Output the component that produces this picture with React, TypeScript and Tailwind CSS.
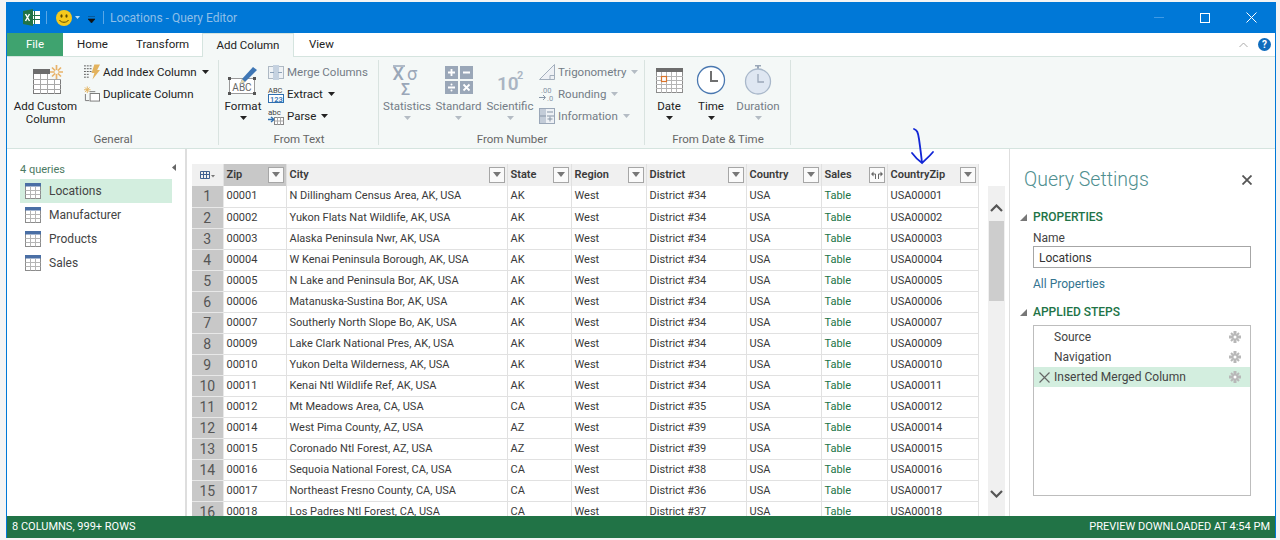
const FONT = { fontFamily: 'Roboto, "Noto Sans", sans-serif' };

const rows: [string, string, string, string][] = [
  ['00001', 'N Dillingham Census Area, AK, USA', 'AK', '34'],
  ['00002', 'Yukon Flats Nat Wildlife, AK, USA', 'AK', '34'],
  ['00003', 'Alaska Peninsula Nwr, AK, USA', 'AK', '34'],
  ['00004', 'W Kenai Peninsula Borough, AK, USA', 'AK', '34'],
  ['00005', 'N Lake and Peninsula Bor, AK, USA', 'AK', '34'],
  ['00006', 'Matanuska-Sustina Bor, AK, USA', 'AK', '34'],
  ['00007', 'Southerly North Slope Bo, AK, USA', 'AK', '34'],
  ['00009', 'Lake Clark National Pres, AK, USA', 'AK', '34'],
  ['00010', 'Yukon Delta Wilderness, AK, USA', 'AK', '34'],
  ['00011', 'Kenai Ntl Wildlife Ref, AK, USA', 'AK', '34'],
  ['00012', 'Mt Meadows Area, CA, USA', 'CA', '35'],
  ['00014', 'West Pima County, AZ, USA', 'AZ', '39'],
  ['00015', 'Coronado Ntl Forest, AZ, USA', 'AZ', '39'],
  ['00016', 'Sequoia National Forest, CA, USA', 'CA', '38'],
  ['00017', 'Northeast Fresno County, CA, USA', 'CA', '36'],
  ['00018', 'Los Padres Ntl Forest, CA, USA', 'CA', '37'],
];

function Caret({ dim }: { dim?: boolean }) {
  return (
    <svg width="7" height="4" viewBox="0 0 7 4" className="shrink-0">
      <path d="M0 0h7L3.500 4z" fill={dim ? '#b4bcc4' : '#222'} />
    </svg>
  );
}

function TableIcon() {
  return (
    <svg width="16" height="16" viewBox="0 0 16 16" className="shrink-0">
      <rect x="0.500" y="0.500" width="15" height="15" fill="#fff" stroke="#8c8c8c" />
      <rect x="0" y="0" width="16" height="3.500" fill="#4a6fa5" />
      <path d="M5.500 3.500v12M10.500 3.500v12M0.500 7.500h15M0.500 11.500h15" stroke="#b5b5b5" />
    </svg>
  );
}

function AddCustomIcon() {
  return (
    <svg width="36" height="30" viewBox="0 0 36 30">
      <rect x="5.500" y="4.500" width="27" height="24" fill="#fff" stroke="#7a7a7a" />
      <rect x="5" y="4" width="20" height="5" fill="#6d6d6d" />
      <path d="M5 14.500h28M5 19.500h28M5 24.500h28M12.500 9v20M19.500 9v20M26.500 9v20" stroke="#a8a8a8" />
      <rect x="22" y="1" width="13" height="13" fill="#f4f8f7" />
      <path d="M28.500 0v14M22 7h13M24 2.500l9 9M33 2.500l-9 9" stroke="#e8b36a" strokeWidth="1.700" />
      <circle cx="28.500" cy="7" r="2" fill="#f4f8f7" />
    </svg>
  );
}

function IndexIcon() {
  return (
    <svg width="17" height="16" viewBox="0 0 17 16">
      <path d="M0 1.500h9M0 4.500h8M0 7.500h8M0 10.500h6M0 13.500h5" stroke="#555" strokeDasharray="2 1" />
      <path d="M11 0h6l-3 6h3L9 16l2-7H8z" fill="#e3b35e" />
    </svg>
  );
}

function DuplicateIcon() {
  return (
    <svg width="17" height="16" viewBox="0 0 17 16">
      <path d="M3.500 0v7M0 3.500h7M1 1l5 5M6 1L1 6" stroke="#e3b35e" />
      <path d="M1.500 8v7h4" fill="none" stroke="#777" />
      <rect x="6.500" y="7.500" width="10" height="8" fill="#fff" stroke="#777" />
      <path d="M6 5.500h6" stroke="#777" />
    </svg>
  );
}

function FormatIcon() {
  return (
    <svg width="30" height="30" viewBox="0 0 30 30" className="overflow-visible">
      <rect x="1.500" y="13.500" width="25" height="15" fill="#fff" stroke="#9a9a9a" />
      <rect x="0" y="12" width="3" height="3" fill="#555" />
      <rect x="25" y="12" width="3" height="3" fill="#555" />
      <rect x="0" y="27" width="3" height="3" fill="#555" />
      <rect x="25" y="27" width="3" height="3" fill="#555" />
      <text x="14" y="26" textAnchor="middle" fontSize="10" fill="#666" style={FONT}>ABC</text>
      <path d="M12 19l2-5L25 2l4 3-12 12z" fill="#3f77b5" />
      <path d="M12 19l2-5 3 3z" fill="#e9d5a8" />
    </svg>
  );
}

function MergeIcon() {
  return (
    <svg width="16" height="16" viewBox="0 0 16 16">
      <rect x="0.500" y="2.500" width="15" height="12" fill="#eef2f5" stroke="#aeb9c4" />
      <rect x="5" y="1" width="6" height="15" fill="#c5d2e0" />
      <path d="M2 8.500h4M14 8.500h-4" stroke="#8fa3b8" />
    </svg>
  );
}

function ExtractIcon() {
  return (
    <svg width="16" height="17" viewBox="0 0 16 17" className="overflow-visible">
      <text x="0" y="7" fontSize="7.500" fill="#444" style={FONT}>ABC</text>
      <rect x="0.500" y="8.500" width="15" height="8" fill="#fff" stroke="#2f6fb0" />
      <text x="2" y="15.500" fontSize="7.500" fontWeight="600" fill="#2f6fb0" style={FONT}>123</text>
    </svg>
  );
}

function ParseIcon() {
  return (
    <svg width="16" height="17" viewBox="0 0 16 17" className="overflow-visible">
      <text x="0" y="7" fontSize="8" fill="#444" style={FONT}>abc</text>
      <path d="M0 11.500h5M3 9l3 2.500L3 14" fill="none" stroke="#2f6fb0" strokeWidth="1.400" />
      <rect x="6.500" y="9.500" width="9" height="7" fill="#fff" stroke="#888" />
      <path d="M9.500 9.500v7M12.500 9.500v7M6.500 13h9" stroke="#aaa" />
    </svg>
  );
}

function StatisticsIcon() {
  return (
    <svg width="30" height="30" viewBox="0 0 30 30" className="overflow-visible">
      <path d="M1 1h12" stroke="#9aa7b8" strokeWidth="1.500" />
      <text x="0.500" y="15" fontSize="18" fontWeight="500" fill="#9aa7b8" style={FONT}>X</text>
      <text x="15" y="15" fontSize="18" fill="#9aa7b8" style={FONT}>σ</text>
      <text x="9" y="30" fontSize="16" fontWeight="500" fill="#9aa7b8" style={FONT}>Σ</text>
    </svg>
  );
}

function StandardIcon() {
  return (
    <svg width="30" height="30" viewBox="0 0 30 30">
      <rect x="1" y="1" width="13" height="13" fill="#9aa7b8" />
      <rect x="16" y="1" width="13" height="13" fill="#9aa7b8" />
      <rect x="1" y="16" width="13" height="13" fill="#9aa7b8" />
      <rect x="16" y="16" width="13" height="13" fill="#9aa7b8" />
      <path d="M4 7.500h7M7.500 4v7M19 7.500h7M4 22.500h7M19.500 19.500l6 6M25.500 19.500l-6 6" stroke="#fff" strokeWidth="1.800" />
      <circle cx="7.500" cy="19.500" r="1" fill="#fff" />
      <circle cx="7.500" cy="25.500" r="1" fill="#fff" />
    </svg>
  );
}

function ScientificIcon() {
  return (
    <svg width="30" height="30" viewBox="0 0 30 30" className="overflow-visible">
      <text x="2" y="25" fontSize="19" fontWeight="600" fill="#aab5c3" style={FONT}>10</text>
      <text x="22" y="14" fontSize="11" fontWeight="600" fill="#aab5c3" style={FONT}>2</text>
    </svg>
  );
}

function TrigIcon() {
  return (
    <svg width="16" height="16" viewBox="0 0 16 16">
      <path d="M15.500 0.500v15H0.500z" fill="#eef1f5" stroke="#a3afbd" />
      <path d="M11 15.500v-4h4.500" fill="none" stroke="#a3afbd" />
    </svg>
  );
}

function RoundingIcon() {
  return (
    <svg width="16" height="16" viewBox="0 0 16 16" className="overflow-visible">
      <text x="2" y="7" fontSize="7.500" fill="#8795a6" style={FONT}>.00</text>
      <path d="M0 11.500h6M4 9l2.500 2.500L4 14" fill="none" stroke="#8795a6" />
      <text x="8" y="15" fontSize="7.500" fill="#8795a6" style={FONT}>.0</text>
    </svg>
  );
}

function InfoIcon() {
  return (
    <svg width="16" height="16" viewBox="0 0 16 16">
      <rect x="0.500" y="0.500" width="15" height="15" fill="#eef1f5" stroke="#9aa7b8" />
      <rect x="1" y="1" width="6" height="14" fill="#c3ccd8" />
      <path d="M8 4h6M8.500 11h5M11 8.500v5M1 8h6M8 8h7" stroke="#8795a6" />
    </svg>
  );
}

function DateIcon() {
  return (
    <svg width="27" height="25" viewBox="0 0 27 25" className="mb-[2px]">
      <rect x="0.500" y="0.500" width="26" height="24" fill="#fff" stroke="#8c8c8c" />
      <rect x="0" y="0" width="27" height="4" fill="#6d6d6d" />
      <path d="M0 8.500h27M0 12.500h27M0 16.500h27M0 20.500h27M5.500 4v21M10.500 4v21M15.500 4v21M20.500 4v21" stroke="#b5b5b5" />
      <rect x="5.500" y="8.500" width="5" height="5" fill="#fff" stroke="#d9742b" strokeWidth="1.200" />
    </svg>
  );
}

function TimeIcon() {
  return (
    <svg width="30" height="30" viewBox="0 0 30 30">
      <circle cx="15" cy="15" r="13.500" fill="#fff" stroke="#4a78b0" strokeWidth="1.300" />
      <path d="M15 6v10h7" fill="none" stroke="#707070" strokeWidth="2" />
    </svg>
  );
}

function DurationIcon() {
  return (
    <svg width="28" height="30" viewBox="0 0 28 30">
      <path d="M11 0.500h6M14 1v3" stroke="#9aa7b8" strokeWidth="2" />
      <circle cx="14" cy="16.500" r="12.500" fill="#dfe7f2" stroke="#a9b8ca" strokeWidth="1.300" />
      <path d="M14 9v8h6" fill="none" stroke="#9aa7b8" strokeWidth="1.300" />
    </svg>
  );
}

function LargeButton({ width, icon, lines, dim, caret }: { width: string; icon: React.ReactNode; lines: string[]; dim?: boolean; caret?: boolean }) {
  return (
    <div className={`${width} flex flex-col items-center pt-[8px] shrink-0`}>
      <div className="h-[30px] flex items-end justify-center">{icon}</div>
      <div className={`mt-[5px] text-center text-[11.5px] leading-[13px] whitespace-nowrap ${dim ? 'text-[#737c86]' : 'text-[#222]'}`}>
        {lines.map((l) => (
          <div key={l}>{l}</div>
        ))}
      </div>
      {caret && (
        <div className="mt-[3px]">
          <Caret dim={dim} />
        </div>
      )}
    </div>
  );
}

function SmallButton({ icon, label, dim, caret }: { icon: React.ReactNode; label: string; dim?: boolean; caret?: boolean }) {
  return (
    <div className={`h-[22px] flex items-center text-[11.5px] whitespace-nowrap ${dim ? 'text-[#737c86]' : 'text-[#222]'}`}>
      <span className="w-[16px] h-[17px] mr-[3px] flex items-center shrink-0">{icon}</span>
      <span className="pt-px">{label}</span>
      {caret && (
        <span className="ml-[5px]">
          <Caret dim={dim} />
        </span>
      )}
    </div>
  );
}

function Group({ width, label, children }: { width: string; label: string; children: React.ReactNode }) {
  return (
    <div className={`${width} shrink-0 relative flex flex-col h-full`}>
      <div className="flex flex-1 min-h-0">{children}</div>
      <div className="h-[18px] text-center text-[11.5px] leading-[18px] text-[#666]">{label}</div>
      <div className="absolute right-0 top-[3px] bottom-[3px] w-px bg-[#d9e3e0]" />
    </div>
  );
}

function FilterButton({ expand }: { expand?: boolean }) {
  return (
    <span className="ml-auto mr-[2px] w-[16px] h-[16px] border border-[#a6a6a6] bg-[#fafafa] flex items-center justify-center shrink-0">
      {expand ? (
        <svg width="12" height="8" viewBox="0 0 12 8">
          <path d="M0 3l2.500-2.500V5.500zM12 3L9.500 0.500V5.500z" fill="#666" />
          <path d="M2 3h2.500v5M10 3H7.500v5" fill="none" stroke="#666" />
        </svg>
      ) : (
        <svg width="8" height="5" viewBox="0 0 8 5">
          <path d="M0 0h8L4 5z" fill="#777" />
        </svg>
      )}
    </span>
  );
}

function Head({ label, active, expand }: { label: string; active?: boolean; expand?: boolean }) {
  return (
    <th className={`p-0 h-[22px] border-r border-[#e1e1e1] ${active ? 'bg-[#c8c8c8]' : 'bg-[#f0f0f0]'}`}>
      <div className="flex items-center pl-[3px] pb-px text-[11px] leading-[16px] font-semibold text-[#3a3a3a]">
        {label}
        <FilterButton expand={expand} />
      </div>
    </th>
  );
}

function Cell({ children, green }: { children: React.ReactNode; green?: boolean }) {
  return (
    <td className={`p-0 pl-[3px] h-[21px] border-r border-b border-[#e1e1e1] text-[11px] leading-[16px] whitespace-nowrap overflow-hidden ${green ? 'text-[#217346]' : 'text-[#3a3a3a]'}`}>
      {children}
    </td>
  );
}

function Gear() {
  return (
    <svg width="12" height="12" viewBox="0 0 12 12" className="ml-auto mr-[9px] shrink-0">
      <path d="M6 0v12M0 6h12" stroke="#b8b8b8" strokeWidth="3" />
      <path d="M2 2l8 8M10 2l-8 8" stroke="#b8b8b8" strokeWidth="2" />
      <circle cx="6" cy="6" r="1.500" fill="#fff" />
    </svg>
  );
}

function Step({ label, active }: { label: string; active?: boolean }) {
  return (
    <div className={`h-[20px] flex items-center text-[12px] text-[#444] ${active ? 'bg-[#d3eedf]' : ''}`}>
      <span className="w-[20px] flex justify-center shrink-0">
        {active && (
          <svg width="11" height="11" viewBox="0 0 11 11">
            <path d="M0.500 0.500l10 10M10.500 0.500l-10 10" stroke="#666" strokeWidth="1.200" />
          </svg>
        )}
      </span>
      {label}
      <Gear />
    </div>
  );
}

function Triangle() {
  return (
    <svg width="7" height="7" viewBox="0 0 7 7" className="shrink-0">
      <path d="M7 0v7H0z" fill="#777" />
    </svg>
  );
}

export default function App() {
  return (
    <div className="w-[1280px] h-[540px] overflow-hidden bg-[#f4f4f4] pt-[2px] pl-[6px] pr-[4px]" style={FONT}>
      <div className="relative h-[536px] flex flex-col border-x border-[#0078d7] bg-white">
        {/* Title bar */}
        <div className="h-[31px] shrink-0 bg-[#0078d7] flex items-center pl-[16px]">
          <svg width="17" height="17" viewBox="0 0 17 17" className="shrink-0">
            <rect x="6" y="2" width="11" height="13" fill="#fff" />
            <path d="M11.500 2v13M6 6.500h11M6 10.500h11" stroke="#217346" />
            <path d="M0 2l10-2v17L0 15z" fill="#217346" />
            <path d="M2.500 5l4 7M6.500 5l-4 7" stroke="#fff" strokeWidth="1.500" />
          </svg>
          <span className="ml-[6px] w-px h-[13px] bg-[#5aa7e6]" />
          <svg width="16" height="16" viewBox="0 0 16 16" className="ml-[9px] shrink-0">
            <circle cx="8" cy="8" r="8" fill="#f5c91c" />
            <ellipse cx="5.500" cy="6" rx="1.100" ry="1.700" fill="#5d4a00" />
            <ellipse cx="10.500" cy="6" rx="1.100" ry="1.700" fill="#5d4a00" />
            <path d="M3.500 10c1.500 3 7.500 3 9 0" fill="none" stroke="#5d4a00" />
          </svg>
          <svg width="5" height="3" viewBox="0 0 5 3" className="ml-[3px] shrink-0">
            <path d="M0 0h5L2.500 3z" fill="#b9dcf5" />
          </svg>
          <svg width="7" height="7" viewBox="0 0 7 7" className="ml-[8px] mt-[3px] shrink-0">
            <path d="M0 0h7M0 3h7L3.500 7z" fill="#111" stroke="#111" strokeWidth="0.600" />
          </svg>
          <span className="ml-[8px] w-px h-[13px] bg-[#5aa7e6]" />
          <span className="ml-[6px] text-[12px] text-[#8fbfe8]">Locations - Query Editor</span>
          <span className="ml-auto w-[10px] h-px bg-[#3f9ae6]" />
          <span className="ml-[36px] w-[10px] h-[10px] border border-white" />
          <svg width="11" height="11" viewBox="0 0 11 11" className="ml-[36px] mr-[18px] shrink-0">
            <path d="M0.500 0.500l10 10M10.500 0.500l-10 10" stroke="#fff" />
          </svg>
        </div>

        {/* Tabs */}
        <div className="h-[23px] shrink-0 flex items-center text-[11.5px] text-[#222] relative">
          <div className="w-[56px] h-full bg-[#3fa36f] text-white flex items-center justify-center pt-px">File</div>
          <div className="w-[73px] pl-[14px] pt-px">Home</div>
          <div className="w-[66px] pt-px">Transform</div>
          <div className="w-[92px] h-[24px] mt-px z-10 bg-[#f4f8f7] border-x border-t border-[#d5e4df] flex items-center justify-center">Add Column</div>
          <div className="ml-[15px] pt-px">View</div>
          <svg width="9" height="6" viewBox="0 0 9 6" className="ml-auto shrink-0">
            <path d="M0.500 5L4.500 1l4 4" fill="none" stroke="#aaa" />
          </svg>
          <span className="ml-[10px] mr-[4px] w-[13px] h-[13px] rounded-full bg-[#0f6cbd] text-white text-[10px] font-bold flex items-center justify-center">?</span>
        </div>

        {/* Ribbon */}
        <div className="h-[93px] shrink-0 flex bg-[#f4f8f7] border-y border-[#d5e4df]">
          <Group width="w-[212px]" label="General">
            <LargeButton width="w-[77px]" icon={<AddCustomIcon />} lines={['Add Custom', 'Column']} />
            <div className="pt-[4px]">
              <SmallButton icon={<IndexIcon />} label="Add Index Column" caret />
              <SmallButton icon={<DuplicateIcon />} label="Duplicate Column" />
            </div>
          </Group>
          <Group width="w-[160px]" label="From Text">
            <LargeButton width="w-[48px]" icon={<FormatIcon />} lines={['Format']} caret />
            <div className="pt-[4px] ml-px">
              <SmallButton icon={<MergeIcon />} label="Merge Columns" dim />
              <SmallButton icon={<ExtractIcon />} label="Extract" caret />
              <SmallButton icon={<ParseIcon />} label="Parse" caret />
            </div>
          </Group>
          <Group width="w-[266px]" label="From Number">
            <LargeButton width="w-[56px]" icon={<StatisticsIcon />} lines={['Statistics']} dim caret />
            <LargeButton width="w-[47px]" icon={<StandardIcon />} lines={['Standard']} dim caret />
            <LargeButton width="w-[56px]" icon={<ScientificIcon />} lines={['Scientific']} dim caret />
            <div className="pt-[4px] ml-px">
              <SmallButton icon={<TrigIcon />} label="Trigonometry" dim caret />
              <SmallButton icon={<RoundingIcon />} label="Rounding" dim caret />
              <SmallButton icon={<InfoIcon />} label="Information" dim caret />
            </div>
          </Group>
          <Group width="w-[146px]" label="From Date & Time">
            <LargeButton width="w-[48px]" icon={<DateIcon />} lines={['Date']} caret />
            <LargeButton width="w-[36px]" icon={<TimeIcon />} lines={['Time']} caret />
            <LargeButton width="w-[58px]" icon={<DurationIcon />} lines={['Duration']} dim caret />
          </Group>
        </div>

        {/* Body */}
        <div className="flex-1 min-h-0 flex overflow-hidden">
          {/* Queries */}
          <div className="w-[180px] shrink-0 border-r-2 border-[#dedede] pl-[13px] pr-[13px] pt-[13px]">
            <div className="flex items-center justify-between h-[17px] text-[11px] text-[#4b7a63]">
              4 queries
              <svg width="4" height="7" viewBox="0 0 4 7" className="-mr-[4px] mb-[6px]">
                <path d="M4 0v7L0 3.500z" fill="#666" />
              </svg>
            </div>
            {['Locations', 'Manufacturer', 'Products', 'Sales'].map((q, i) => (
              <div key={q} className={`h-[24px] flex items-center pl-[5px] text-[12px] text-[#444] ${i === 0 ? 'bg-[#d3eedf]' : ''}`}>
                <TableIcon />
                <span className="ml-[8px]">{q}</span>
              </div>
            ))}
          </div>

          {/* Grid */}
          <div className="w-[786px] ml-[5px] pt-[15px] shrink-0">
            <table className="table-fixed w-[786px] border-collapse">
              <colgroup>
                <col className="w-[31px]" />
                <col className="w-[63px]" />
                <col className="w-[221px]" />
                <col className="w-[64px]" />
                <col className="w-[75px]" />
                <col className="w-[100px]" />
                <col className="w-[75px]" />
                <col className="w-[66px]" />
                <col className="w-[91px]" />
              </colgroup>
              <thead>
                <tr>
                  <th className="p-0 h-[22px] bg-[#f0f0f0] border-r border-[#e1e1e1]">
                    <div className="flex items-center justify-center">
                      <svg width="15" height="8" viewBox="0 0 15 8">
                        <path d="M0.500 0.500h9v7h-9zM3.500 0.500v7M6.500 0.500v7M0.500 3.500h9" fill="none" stroke="#3f5f8f" />
                        <path d="M11 4h4l-2 2.500z" fill="#777" />
                      </svg>
                    </div>
                  </th>
                  <Head label="Zip" active />
                  <Head label="City" />
                  <Head label="State" />
                  <Head label="Region" />
                  <Head label="District" />
                  <Head label="Country" />
                  <Head label="Sales" expand />
                  <Head label="CountryZip" />
                </tr>
              </thead>
              <tbody>
                {rows.map((r, i) => (
                  <tr key={r[0]}>
                    <td className="p-0 h-[21px] bg-[#c8c8c8] border-r border-b border-[#e8e8e8] text-center text-[14px] leading-[16px] text-[#555]">{i + 1}</td>
                    <Cell>{r[0]}</Cell>
                    <Cell>{r[1]}</Cell>
                    <Cell>{r[2]}</Cell>
                    <Cell>West</Cell>
                    <Cell>District #{r[3]}</Cell>
                    <Cell>USA</Cell>
                    <Cell green>Table</Cell>
                    <Cell>USA{r[0]}</Cell>
                  </tr>
                ))}
              </tbody>
            </table>
          </div>

          {/* Scrollbar */}
          <div className="ml-[10px] mt-[37px] w-[17px] shrink-0 bg-[#f0f0f0] flex flex-col items-center pt-[18px] pb-[18px]">
            <svg width="13" height="8" viewBox="0 0 13 8" className="shrink-0">
              <path d="M1 7l5.500-5.500L12 7" fill="none" stroke="#555" strokeWidth="2.200" />
            </svg>
            <div className="mt-[9px] w-[15px] h-[80px] bg-[#cdcdcd] shrink-0" />
            <svg width="13" height="8" viewBox="0 0 13 8" className="mt-auto shrink-0">
              <path d="M1 1l5.500 5.500L12 1" fill="none" stroke="#555" strokeWidth="2.200" />
            </svg>
          </div>

          {/* Query settings */}
          <div className="ml-[4px] flex-1 min-w-0 border-l border-[#dedede] pl-[14px] pt-[15px]">
            <div className="flex items-center h-[32px]">
              <span className="text-[19.5px] font-light text-[#4f8f90]">Query Settings</span>
              <svg width="10" height="10" viewBox="0 0 10 10" className="ml-auto mr-[23px] shrink-0">
                <path d="M0.500 0.500l9 9M9.500 0.500l-9 9" stroke="#555" strokeWidth="1.800" />
              </svg>
            </div>
            <div className="mt-[13px] -ml-[4px] flex items-center h-[16px] text-[12px] font-medium text-[#217346]">
              <Triangle />
              <span className="ml-[6px]">PROPERTIES</span>
            </div>
            <div className="pl-[9px] pr-[24px]">
              <div className="mt-[5px] h-[16px] leading-[16px] text-[12px] text-[#444]">Name</div>
              <div className="h-[22px] border border-[#a6a6a6] pl-[5px] pt-px flex items-center text-[12px] text-[#333]">Locations</div>
              <div className="mt-[8px] h-[16px] leading-[16px] text-[12px] text-[#33748f]">All Properties</div>
            </div>
            <div className="mt-[12px] -ml-[4px] flex items-center h-[16px] text-[12px] font-medium text-[#217346]">
              <Triangle />
              <span className="ml-[6px]">APPLIED STEPS</span>
            </div>
            <div className="ml-[9px] mr-[24px] mt-[5px] h-[171px] border border-[#bdbdbd] pt-[1px]">
              <Step label="Source" />
              <Step label="Navigation" />
              <Step label="Inserted Merged Column" active />
            </div>
          </div>
        </div>

        {/* Status bar */}
        <div className="h-[22px] shrink-0 bg-[#217346] text-white text-[11px] flex items-center justify-between pl-[5px] pr-[5px]">
          <span>8 COLUMNS, 999+ ROWS</span>
          <span>PREVIEW DOWNLOADED AT 4:54 PM</span>
        </div>

        {/* Hand-drawn annotation */}
        <svg width="30" height="40" viewBox="0 0 30 40" className="absolute left-[899px] top-[125px]">
          <path d="M8 2c3 1 4 3 5 10s2 14 3 24M6 26c3 4 7 8 10 10 3-3 7-6 11-11" fill="none" stroke="#1226d6" strokeWidth="1.800" strokeLinecap="round" />
        </svg>
      </div>
    </div>
  );
}
